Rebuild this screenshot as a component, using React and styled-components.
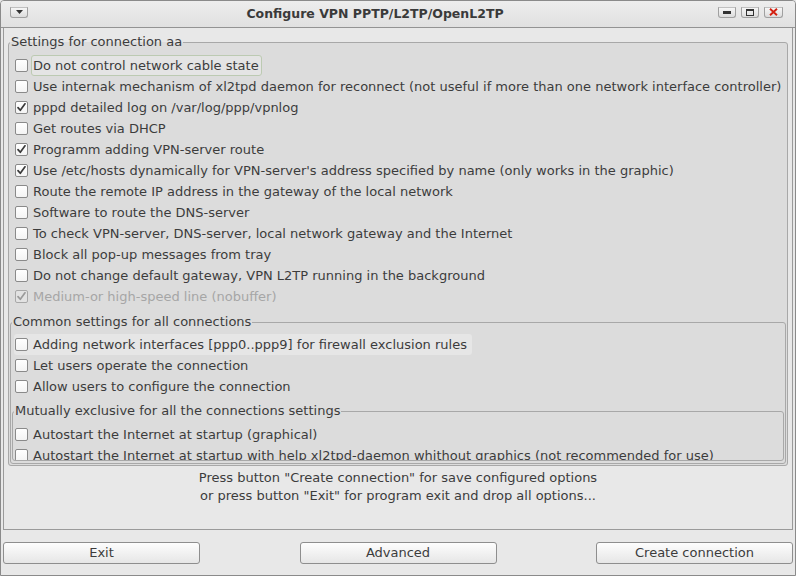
import React from "react";
import styled, { createGlobalStyle } from "styled-components";

const Global = createGlobalStyle`
  html, body { margin: 0; padding: 0; background: #e8e8e8; }
  body { font-family: "DejaVu Sans", "Liberation Sans", sans-serif; }
  * { box-sizing: border-box; }
`;

const Window = styled.div`
  width: 796px;
  height: 576px;
  border: 1px solid #8a8a8a;
  border-radius: 4px 4px 0 0;
  background: #e8e8e8;
  display: flex;
  flex-direction: column;
  overflow: hidden;
  color: #3c3c3c;
  font-size: 13px;
`;

const TitleBar = styled.div`
  flex: none;
  height: 27px;
  border-bottom: 1px solid #939393;
  background: linear-gradient(#ededed, #e0e0e0);
  display: flex;
  align-items: center;
`;

const TitleSide = styled.div`
  flex: none;
  width: ${(p) => p.$w}px;
  display: flex;
  align-items: center;
  gap: 5px;
  padding-left: ${(p) => p.$pl || 0}px;
  padding-bottom: 4px;
`;

const Title = styled.div`
  flex: 1;
  text-align: center;
  font-weight: bold;
  font-size: 12.5px;
  color: #3a3a3a;
  padding-bottom: 2px;
`;

const WinBtn = styled.div`
  width: ${(p) => p.$w || 18}px;
  height: 11px;
  border: 1px solid #a0a0a0;
  border-top-color: #c0c0c0;
  border-radius: 0 0 3px 3px;
  background: linear-gradient(#f6f6f6, #dcdcdc);
  display: flex;
  align-items: center;
  justify-content: center;
`;

const Body = styled.div`
  flex: 1;
  display: flex;
  flex-direction: column;
`;

const MainFrame = styled.div`
  flex: none;
  height: 502px;
  margin: 0 2px;
  border: 1px solid #9a9a9a;
  border-top: none;
  padding: 6px 4px 0;
  display: flex;
  flex-direction: column;
`;

const Group = styled.fieldset`
  margin: ${(p) => p.$mt || 0}px 0 0;
  padding: 0 1px 1px;
  border: 1px solid #a8a8a8;
  border-radius: 3px;
  background: #dcdcdc;
  min-width: 0;
  height: ${(p) => p.$h}px;
  overflow: hidden;
`;

const Legend = styled.legend`
  padding: 0 1px;
  margin-left: 0;
  line-height: 16px;
  color: #3c3c3c;
`;

const Rows = styled.div`
  padding-top: ${(p) => p.$pt || 4}px;
`;

const Row = styled.div`
  display: flex;
  align-items: center;
  width: fit-content;
  height: 21px;
  margin-left: ${(p) => p.$ml}px;
  padding: 0 2px 0 1px;
  border-radius: 3px;
  background: ${(p) => (p.$hover ? "#e6e6e6" : "transparent")};
  color: ${(p) => (p.$disabled ? "#a6a6a6" : "#3c3c3c")};
  white-space: nowrap;
`;

const Box = styled.span`
  flex: none;
  width: 13px;
  height: 13px;
  border: 1px solid ${(p) => (p.$disabled ? "#a8a8a8" : "#8a8a8a")};
  border-radius: 2px;
  background: ${(p) =>
    p.$disabled ? "#e2e2e2" : "linear-gradient(#ffffff, #f4f4f4)"};
  display: flex;
  align-items: center;
  justify-content: center;
`;

const Label = styled.span`
  margin-left: 3px;
  padding: 0 2px 0 1px;
  height: 21px;
  line-height: 19px;
  border: 1px solid ${(p) => (p.$focus ? "#bccab2" : "transparent")};
  border-radius: 3px;
  background: ${(p) => (p.$focus ? "#e4e4e4" : "transparent")};
`;

const Info = styled.div`
  margin-top: 3px;
  text-align: center;
  line-height: 18px;
`;

const ButtonRow = styled.div`
  flex: none;
  display: flex;
  justify-content: space-between;
  padding: 12px 2px 0;
`;

const Button = styled.div`
  width: 197px;
  height: 22px;
  border: 1px solid #8e8e8e;
  border-radius: 3px;
  background: linear-gradient(#fdfdfd, #e6e6e6);
  text-align: center;
  line-height: 20px;
  color: #3c3c3c;
`;

const Check = ({ color }) => (
  <svg width="11" height="11" viewBox="0 0 11 11">
    <path
      d="M2 5.6 L4.3 8.3 L9 1.8"
      fill="none"
      stroke={color}
      strokeWidth="1.7"
      strokeLinecap="round"
      strokeLinejoin="round"
    />
  </svg>
);

const CheckRow = ({ text, checked, ml, hover, focus, disabled }) => (
  <Row $ml={ml} $hover={hover} $disabled={disabled}>
    <Box $disabled={disabled}>
      {checked && <Check color={disabled ? "#9a9a9a" : "#3a3a3a"} />}
    </Box>
    <Label $focus={focus}>{text}</Label>
  </Row>
);

const group1 = [
  { text: "Do not control network cable state", focus: true },
  {
    text:
      "Use internak mechanism of xl2tpd daemon for reconnect (not useful if more than one network interface controller)",
  },
  { text: "pppd detailed log on /var/log/ppp/vpnlog", checked: true },
  { text: "Get routes via DHCP" },
  { text: "Programm adding VPN-server route", checked: true },
  {
    text:
      "Use /etc/hosts dynamically for VPN-server's address specified by name (only works in the graphic)",
    checked: true,
  },
  { text: "Route the remote IP address in the gateway of the local network" },
  { text: "Software to route the DNS-server" },
  {
    text:
      "To check VPN-server, DNS-server, local network gateway and the Internet",
  },
  { text: "Block all pop-up messages from tray" },
  {
    text: "Do not change default gateway, VPN L2TP running in the background",
  },
  { text: "Medium-or high-speed line (nobuffer)", checked: true, disabled: true },
];

const group2 = [
  {
    text: "Adding network interfaces [ppp0..ppp9] for firewall exclusion rules",
    hover: true,
  },
  { text: "Let users operate the connection" },
  { text: "Allow users to configure the connection" },
];

const group3 = [
  { text: "Autostart the Internet at startup (graphical)" },
  {
    text:
      "Autostart the Internet at startup with help xl2tpd-daemon whithout graphics (not recommended for use)",
  },
];

export default function App() {
  return (
    <>
      <Global />
      <Window>
        <TitleBar>
          <TitleSide $w={35} $pl={9}>
            <WinBtn $w={18}>
              <svg width="7" height="4" viewBox="0 0 7 4">
                <path d="M0 0 H7 L3.5 4 Z" fill="#333" />
              </svg>
            </WinBtn>
          </TitleSide>
          <Title>Configure VPN PPTP/L2TP/OpenL2TP</Title>
          <TitleSide $w={81} $pl={4}>
            <WinBtn $w={18}>
              <svg width="8" height="3" viewBox="0 0 8 3">
                <rect x="0" y="0" width="8" height="3" fill="#333" />
              </svg>
            </WinBtn>
            <WinBtn $w={18}>
              <svg width="8" height="7" viewBox="0 0 8 7">
                <rect x="0.5" y="0.5" width="7" height="6" fill="none" stroke="#333" />
                <rect x="0" y="0" width="8" height="2" fill="#333" />
              </svg>
            </WinBtn>
            <WinBtn $w={19}>
              <svg width="9" height="8" viewBox="0 0 9 8">
                <path d="M1 0.8 L8 7.2 M8 0.8 L1 7.2" stroke="#d42010" strokeWidth="1.9" />
              </svg>
            </WinBtn>
          </TitleSide>
        </TitleBar>
        <Body>
          <MainFrame>
            <Group $h={432}>
              <Legend>Settings for connection aa</Legend>
              <Rows $pt={5}>
                {group1.map((r) => (
                  <CheckRow key={r.text} ml={4} {...r} />
                ))}
              </Rows>
              <Group $h={150} $mt={7}>
                <Legend>Common settings for all connections</Legend>
                <Rows $pt={4}>
                  {group2.map((r) => (
                    <CheckRow key={r.text} ml={2} {...r} />
                  ))}
                </Rows>
                <Group $h={58} $mt={6}>
                  <Legend>Mutually exclusive for all the connections settings</Legend>
                  <Rows $pt={5}>
                    {group3.map((r) => (
                      <CheckRow key={r.text} ml={0} {...r} />
                    ))}
                  </Rows>
                </Group>
              </Group>
            </Group>
            <Info>
              Press button "Create connection" for save configured options
              <br />
              or press button "Exit" for program exit and drop all options...
            </Info>
          </MainFrame>
          <ButtonRow>
            <Button>Exit</Button>
            <Button>Advanced</Button>
            <Button>Create connection</Button>
          </ButtonRow>
        </Body>
      </Window>
    </>
  );
}
